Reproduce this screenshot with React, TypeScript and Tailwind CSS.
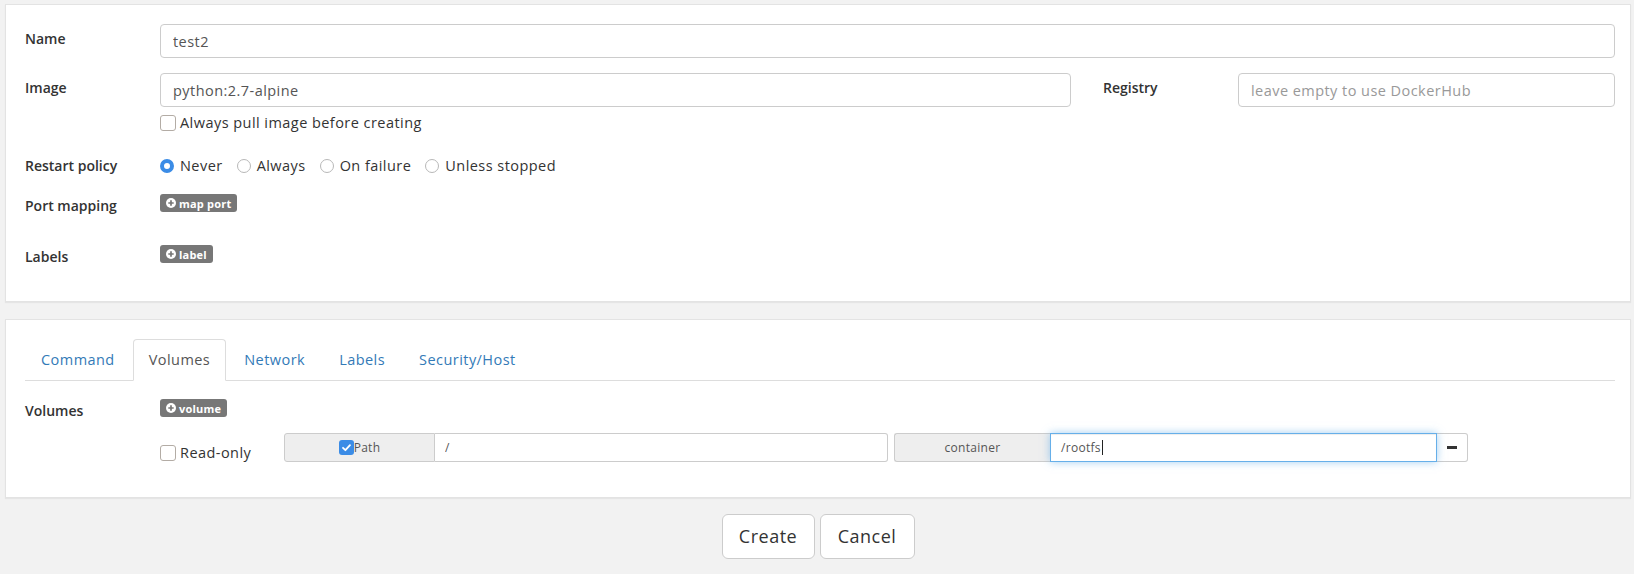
import React from "react";

function PlusBadge({ text }: { text: string }) {
  return (
    <span className="inline-flex items-center h-[18px] pl-[6px] pr-[6px] rounded-[3px] bg-[#777] text-white text-[11px] font-bold leading-none gap-[3px] tracking-[0.2px]">
      <svg width="10" height="10" viewBox="0 0 10 10">
        <circle cx="5" cy="5" r="5" fill="white" />
        <path d="M5 2.3v5.4M2.3 5h5.4" stroke="#777" strokeWidth="1.7" />
      </svg>
      {text}
    </span>
  );
}

function Label({ children, className = "" }: { children: React.ReactNode; className?: string }) {
  return (
    <div className={"w-[135px] shrink-0 text-[14px] font-semibold text-[#333] leading-[20px] " + className}>
      {children}
    </div>
  );
}

function Checkbox() {
  return <span className="w-[16px] h-[16px] shrink-0 border border-[#b3aca5] rounded-[3px] bg-white" />;
}

function Radio({ checked, label }: { checked?: boolean; label: string }) {
  return (
    <div className="flex items-center gap-[6px] mr-[14px]">
      {checked ? (
        <span className="w-[14px] h-[14px] rounded-full border-[4px] border-[#3b8ce6] bg-white" />
      ) : (
        <span className="w-[14px] h-[14px] rounded-full border border-[#b8b8b8] bg-white" />
      )}
      <span className="text-[14.5px] text-[#333] tracking-[0.45px]">{label}</span>
    </div>
  );
}

const inputCls =
  "h-[34px] border border-[#ccc] rounded-[4px] px-[12px] text-[14.5px] text-[#555] tracking-[0.45px] bg-white outline-none placeholder:text-[#999]";

export default function App() {
  return (
    <div className="min-h-[574px] bg-[#f2f2f2] pt-[4px] pl-[5px] pr-[3px] font-['Open_Sans',sans-serif]">
      {/* Card 1 */}
      <div className="bg-white border border-[#e3e3e3] shadow-[0_1px_1px_rgba(0,0,0,0.05)] pt-[19px] pl-[19px] pr-[15px] pb-[34px]">
        <div className="flex h-[34px]">
          <Label className="mt-[5px]">Name</Label>
          <input readOnly value="test2" className={inputCls + " flex-1"} />
        </div>
        <div className="mt-[15px] flex items-start">
          <Label className="mt-[5px]">Image</Label>
          <div className="w-[911px] shrink-0">
            <input readOnly value="python:2.7-alpine" className={inputCls + " w-full"} />
            <div className="mt-[8px] flex items-center h-[16px] gap-[4px]">
              <Checkbox />
              <span className="text-[14.5px] text-[#333] tracking-[0.45px]">Always pull image before creating</span>
            </div>
          </div>
          <Label className="mt-[5px] ml-[32px] w-[134px]">Registry</Label>
          <input readOnly placeholder="leave empty to use DockerHub" className={inputCls + " flex-1 min-w-0"} />
        </div>
        <div className="mt-[25px] h-[20px] flex items-center">
          <Label>Restart policy</Label>
          <Radio checked label="Never" />
          <Radio label="Always" />
          <Radio label="On failure" />
          <Radio label="Unless stopped" />
        </div>
        <div className="mt-[18px] h-[22px] flex items-start">
          <Label className="mt-[2px]">Port mapping</Label>
          <PlusBadge text="map port" />
        </div>
        <div className="mt-[29px] h-[22px] flex items-start">
          <Label className="mt-[2px]">Labels</Label>
          <PlusBadge text="label" />
        </div>
      </div>

      {/* Card 2 */}
      <div className="mt-[17px] bg-white border border-[#e3e3e3] shadow-[0_1px_1px_rgba(0,0,0,0.05)] pt-[19px] pl-[19px] pr-[15px] pb-[35px]">
        <div className="flex border-b border-[#ddd]">
          {["Command", "Volumes", "Network", "Labels", "Security/Host"].map((t) => (
            <div
              key={t}
              className={
                "-mb-px mr-[2px] px-[15px] py-[10px] leading-[20px] text-[14.5px] tracking-[0.45px] border rounded-t-[4px] " +
                (t === "Volumes"
                  ? "border-[#ddd] border-b-white bg-white text-[#555]"
                  : "border-transparent text-[#337ab7]")
              }
            >
              {t}
            </div>
          ))}
        </div>
        <div className="mt-[18px] h-[22px] flex items-start">
          <Label className="mt-[2px]">Volumes</Label>
          <PlusBadge text="volume" />
        </div>
        <div className="mt-[12px] flex items-start">
          <div className="w-[135px] shrink-0" />
          <div className="w-[124px] shrink-0 pt-[12px] flex items-center gap-[4px]">
            <Checkbox />
            <span className="text-[14.5px] text-[#333] tracking-[0.45px] leading-[16px]">Read-only</span>
          </div>
          <div className="w-[604px] shrink-0 flex h-[29px]">
            <div className="w-[151px] shrink-0 bg-[#eee] border border-[#ccc] rounded-l-[3px] flex items-center justify-center text-[12px] text-[#555] tracking-[0.3px]">
              <span className="w-[15px] h-[15px] rounded-[3px] bg-[#3b8ce6] flex items-center justify-center">
                <svg width="11" height="11" viewBox="0 0 12 12">
                  <path d="M2.2 6.3l2.6 2.6 5-5.4" fill="none" stroke="white" strokeWidth="2" strokeLinecap="round" strokeLinejoin="round" />
                </svg>
              </span>
              Path
            </div>
            <input
              readOnly
              value="/"
              className="flex-1 min-w-0 border border-l-0 border-[#ccc] rounded-r-[3px] px-[10px] text-[12px] text-[#555] outline-none"
            />
          </div>
          <div className="ml-[6px] w-[574px] shrink-0 flex h-[29px]">
            <div className="w-[156px] shrink-0 bg-[#eee] border border-r-0 border-[#ccc] rounded-l-[3px] flex items-center justify-center text-[12px] text-[#555] tracking-[0.3px]">
              container
            </div>
            <div className="w-[387px] shrink-0 border border-[#66afe9] shadow-[inset_0_1px_1px_rgba(0,0,0,0.075),0_0_8px_rgba(102,175,233,0.6)] px-[10px] flex items-center text-[12px] text-[#555] tracking-[0.3px] relative z-10 bg-white">
              /rootfs
              <span className="w-px h-[15px] bg-[#222] ml-[1px]" />
            </div>
            <div className="flex-1 border border-l-0 border-[#ccc] rounded-r-[3px] flex items-center justify-center bg-white">
              <span className="w-[10px] h-[3px] bg-[#333]" />
            </div>
          </div>
        </div>
      </div>

      {/* Buttons */}
      <div className="mt-[16px] flex justify-center gap-[5px]">
        <div className="w-[93px] h-[45px] bg-white border border-[#ccc] rounded-[6px] flex items-center justify-center text-[18px] text-[#333] tracking-[0.5px]">
          Create
        </div>
        <div className="w-[95px] h-[45px] bg-white border border-[#ccc] rounded-[6px] flex items-center justify-center text-[18px] text-[#333] tracking-[0.5px]">
          Cancel
        </div>
      </div>
    </div>
  );
}
